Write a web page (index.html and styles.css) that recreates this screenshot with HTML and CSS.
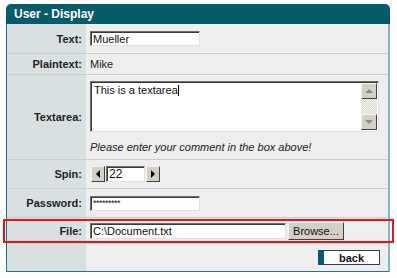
FILE: index.html
```html
<!DOCTYPE html>
<html lang="en">
<head>
  <meta charset="UTF-8" />
  <title>User - Display</title>
  <link rel="stylesheet" href="styles.css">
</head>
<body>
  <div class="panel">
    <div class="panel-title">User - Display</div>
    <div class="panel-body">
      <div class="row row-text">
        <div class="label">Text:</div>
        <div class="value"><input class="field" type="text" value="Mueller"></div>
      </div>

      <div class="row row-plain">
        <div class="label">Plaintext:</div>
        <div class="value">Mike</div>
      </div>

      <div class="row row-area">
        <div class="label">Textarea:</div>
        <div class="value value-col">
          <div class="textarea">
            <div class="textarea-text">This is a textarea<span class="caret"></span></div>
            <div class="scrollbar">
              <span class="sb-btn"><span class="tri-up"></span></span>
              <span class="sb-track"></span>
              <span class="sb-btn"><span class="tri-down"></span></span>
            </div>
          </div>
          <div class="hint">Please enter your comment in the box above!</div>
        </div>
      </div>

      <div class="row row-spin">
        <div class="label">Spin:</div>
        <div class="value">
          <span class="spin-btn"><span class="tri-left"></span></span>
          <input class="field spin-field" type="text" value="22">
          <span class="spin-btn"><span class="tri-right"></span></span>
        </div>
      </div>

      <div class="row row-pass">
        <div class="label">Password:</div>
        <div class="value"><input class="field pass-field" type="text" value="*********"></div>
      </div>

      <div class="row row-file highlight">
        <div class="label">File:</div>
        <div class="value">
          <input class="field file-field" type="text" value="C:\Document.txt">
          <button class="browse">Browse...</button>
        </div>
      </div>

      <div class="row row-foot">
        <div class="label"></div>
        <div class="value value-foot"><button class="back">back</button></div>
      </div>
    </div>
  </div>
</body>
</html>
```

FILE: styles.css
```css
* {
  box-sizing: border-box;
  margin: 0;
  padding: 0;
}

body {
  background: #fff;
  font-family: "Liberation Sans", Arial, sans-serif;
  font-size: 11px;
  color: #222;
}

.panel {
  width: 384px;
  margin: 4px 0 0 6px;
}

.panel-title {
  height: 20px;
  line-height: 20px;
  padding-left: 8px;
  background: #065b6b;
  color: #fff;
  font-size: 12px;
  font-weight: bold;
  border-radius: 5px 5px 0 0;
}

.panel-body {
  border-left: 1px solid #2a7380;
  border-right: 2px solid #86b6be;
  border-bottom: 1px solid #2a7380;
}

.row {
  display: grid;
  grid-template-columns: 79px 1fr;
  border-bottom: 1px solid #cdcdcd;
}

.label {
  background: #d9e0e1;
  font-weight: bold;
  text-align: right;
  padding-right: 4px;
  display: flex;
  align-items: center;
  justify-content: flex-end;
}

.value {
  background: #eeeeee;
  padding-left: 4px;
  display: flex;
  align-items: center;
}

.row-text { height: 30px; }
.row-plain { height: 21px; }
.row-area { height: 85px; }
.row-spin { height: 29px; }
.row-pass { height: 29px; }
.row-file { height: 26px; }
.row-foot { height: 27px; border-bottom: none; }

.field {
  width: 110px;
  height: 15px;
  font-family: "Liberation Sans", Arial, sans-serif;
  font-size: 11px;
  padding: 0 2px;
  background: #fff;
  border: 1px solid;
  border-color: #6e6e6e #e2e2e2 #e2e2e2 #6e6e6e;
  box-shadow: inset 1px 1px 0 #3a3a3a;
  color: #111;
  outline: none;
}

.value-col {
  flex-direction: column;
  align-items: flex-start;
  justify-content: flex-start;
  padding-top: 6px;
}

.textarea {
  display: flex;
  width: 289px;
  height: 51px;
  background: #fff;
  border: 1px solid;
  border-color: #6e6e6e #e2e2e2 #e2e2e2 #6e6e6e;
  box-shadow: inset 1px 1px 0 #3a3a3a;
}

.textarea-text {
  flex: 1;
  padding: 2px 3px;
  color: #111;
}

.caret {
  display: inline-block;
  width: 1px;
  height: 11px;
  background: #000;
  vertical-align: -2px;
}

.scrollbar {
  width: 16px;
  display: flex;
  flex-direction: column;
  margin: 1px 1px 1px 0;
}

.sb-btn {
  height: 16px;
  background: #d4d0c8;
  border: 1px solid;
  border-color: #f4f4f4 #404040 #404040 #f4f4f4;
  display: flex;
  align-items: center;
  justify-content: center;
}

.sb-track {
  flex: 1;
  background-color: #ecebe6;
  background-image: repeating-conic-gradient(#dcdad2 0 25%, #f4f3ef 0 50%);
  background-size: 2px 2px;
}

.tri-up,
.tri-down,
.tri-left,
.tri-right {
  width: 0;
  height: 0;
  border: 4px solid transparent;
}

.tri-up { border-bottom-color: #8a8a8a; border-top-width: 0; }
.tri-down { border-top-color: #8a8a8a; border-bottom-width: 0; }
.tri-left { border-right-color: #000; border-width: 4px 4px 4px 0; }
.tri-right { border-left-color: #000; border-width: 4px 0 4px 4px; }

.hint {
  margin-top: 9px;
  font-style: italic;
  color: #222;
}

.spin-btn {
  width: 14px;
  height: 16px;
  background: #d4d0c8;
  border: 1px solid;
  border-color: #f4f4f4 #404040 #404040 #f4f4f4;
  display: inline-flex;
  align-items: center;
  justify-content: center;
  margin-left: 1px;
}

.spin-field {
  width: 39px;
  height: 16px;
  margin-left: 1px;
  font-size: 12px;
}

.pass-field {
  font-size: 9px;
  letter-spacing: -0.5px;
}

.file-field {
  width: 196px;
  height: 16px;
}

.browse {
  width: 56px;
  height: 18px;
  margin-left: 2px;
  background: #d4d0c8;
  border: 1px solid;
  border-color: #f4f4f4 #404040 #404040 #f4f4f4;
  font-family: "Liberation Sans", Arial, sans-serif;
  font-size: 11px;
  color: #111;
}

.highlight {
  position: relative;
}

.highlight::after {
  content: "";
  position: absolute;
  top: 1px;
  bottom: 0;
  left: -4px;
  right: -6px;
  border: 2px solid #e8141c;
  pointer-events: none;
}

.value-foot {
  justify-content: flex-end;
  padding-right: 8px;
}

.back {
  width: 62px;
  height: 15px;
  background: #fff;
  border: 1px solid #2f3f44;
  border-left: 6px solid #065b6b;
  font-family: "Liberation Sans", Arial, sans-serif;
  font-size: 11px;
  font-weight: bold;
  color: #111;
}
```
